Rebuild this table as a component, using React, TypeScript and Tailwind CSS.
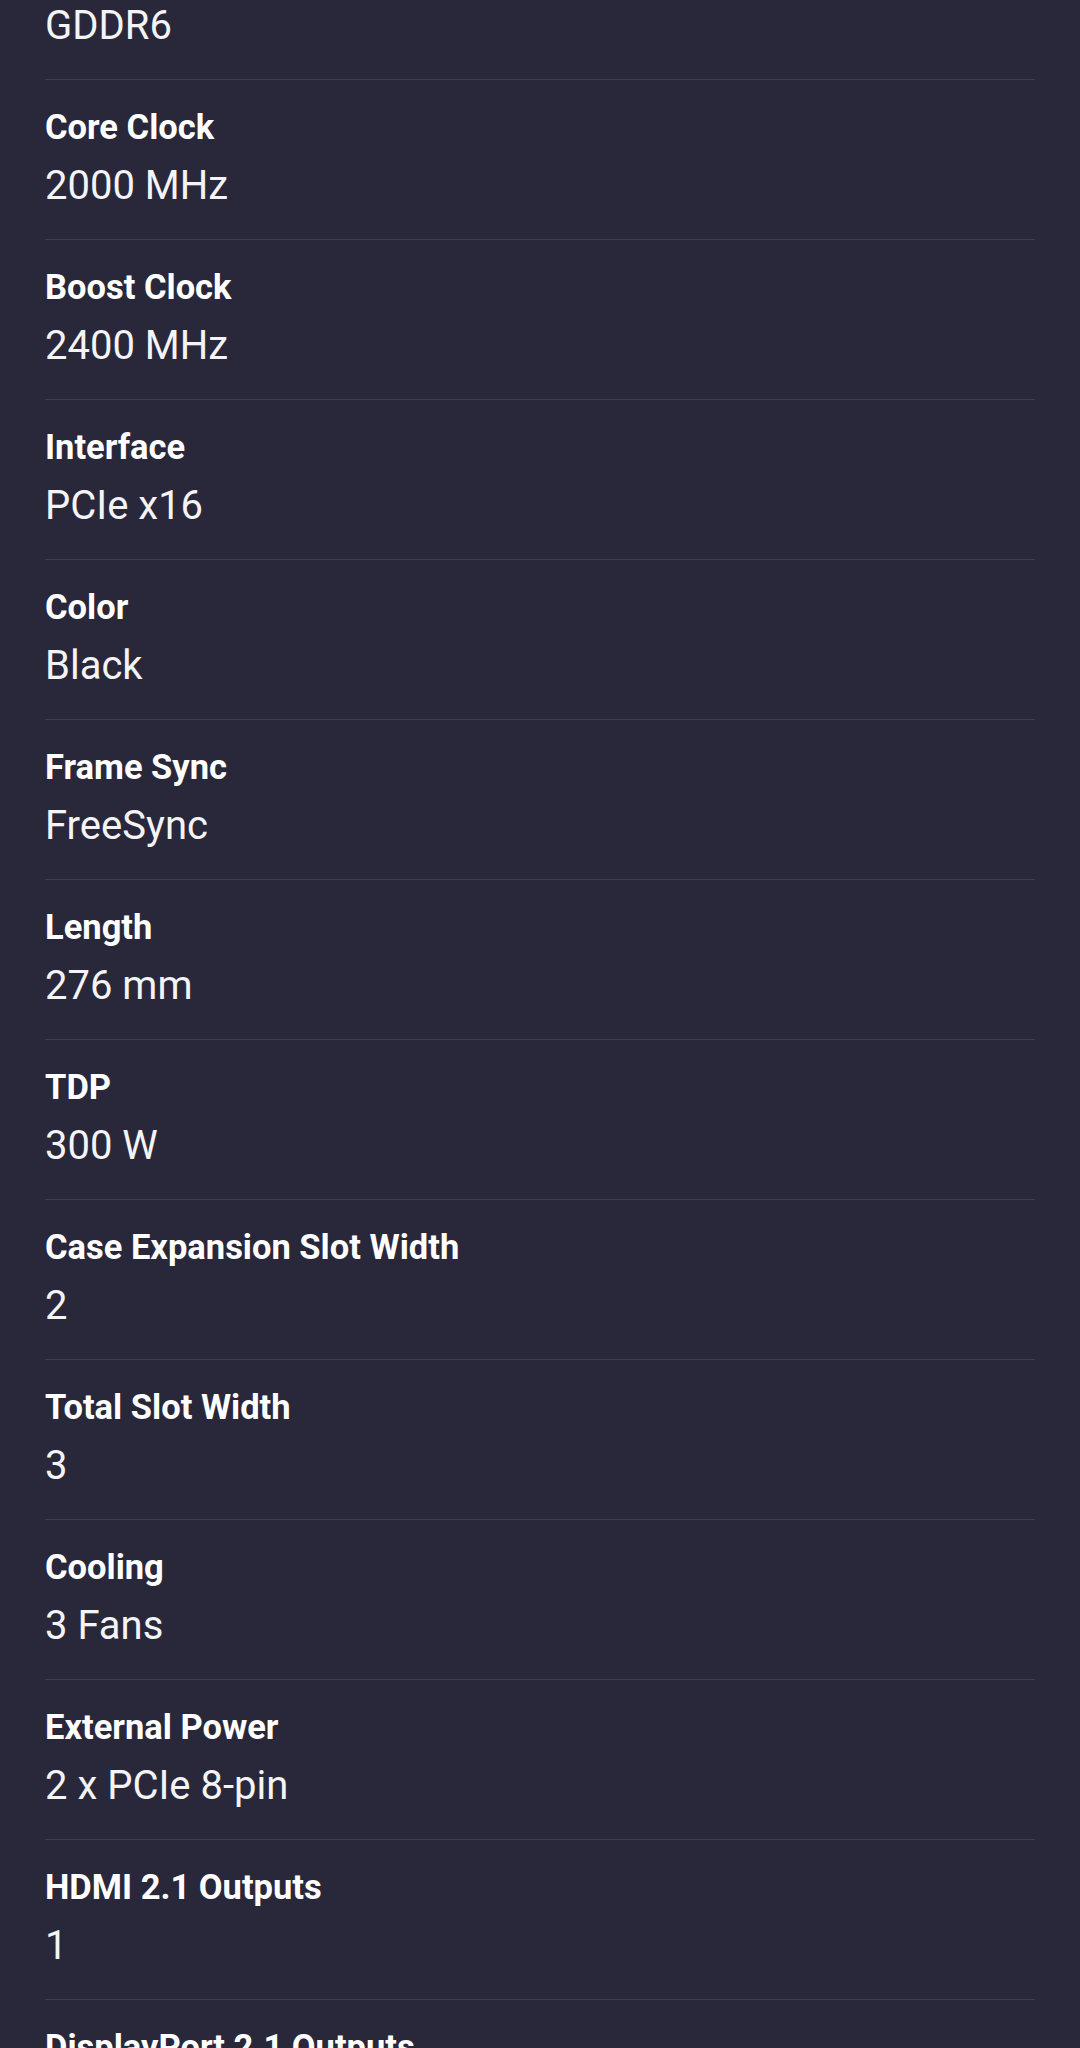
import React from 'react';

const SPECS = [
  { label: 'Memory Type', value: 'GDDR6' },
  { label: 'Core Clock', value: '2000 MHz' },
  { label: 'Boost Clock', value: '2400 MHz' },
  { label: 'Interface', value: 'PCIe x16' },
  { label: 'Color', value: 'Black' },
  { label: 'Frame Sync', value: 'FreeSync' },
  { label: 'Length', value: '276 mm' },
  { label: 'TDP', value: '300 W' },
  { label: 'Case Expansion Slot Width', value: '2' },
  { label: 'Total Slot Width', value: '3' },
  { label: 'Cooling', value: '3 Fans' },
  { label: 'External Power', value: '2 x PCIe 8-pin' },
  { label: 'HDMI 2.1 Outputs', value: '1' },
  { label: 'DisplayPort 2.1 Outputs', value: '3' },
];

const App: React.FC = () => {
  return (
    <div className="h-[2048px] w-full overflow-hidden bg-[#29283a] font-['Roboto',sans-serif] text-white">
      <div className="mx-[45px] -mt-[80px]">
        {SPECS.map((spec) => (
          <div
            key={spec.label}
            className="flex h-[160px] flex-col border-b border-[#3f3e50] pt-[27px]"
          >
            <div className="text-[34.5px] font-bold leading-[40px]">{spec.label}</div>
            <div className="mt-[15px] text-[40px] leading-[48px] text-[#f4f4f6]">{spec.value}</div>
          </div>
        ))}
      </div>
    </div>
  );
};

export default App;
